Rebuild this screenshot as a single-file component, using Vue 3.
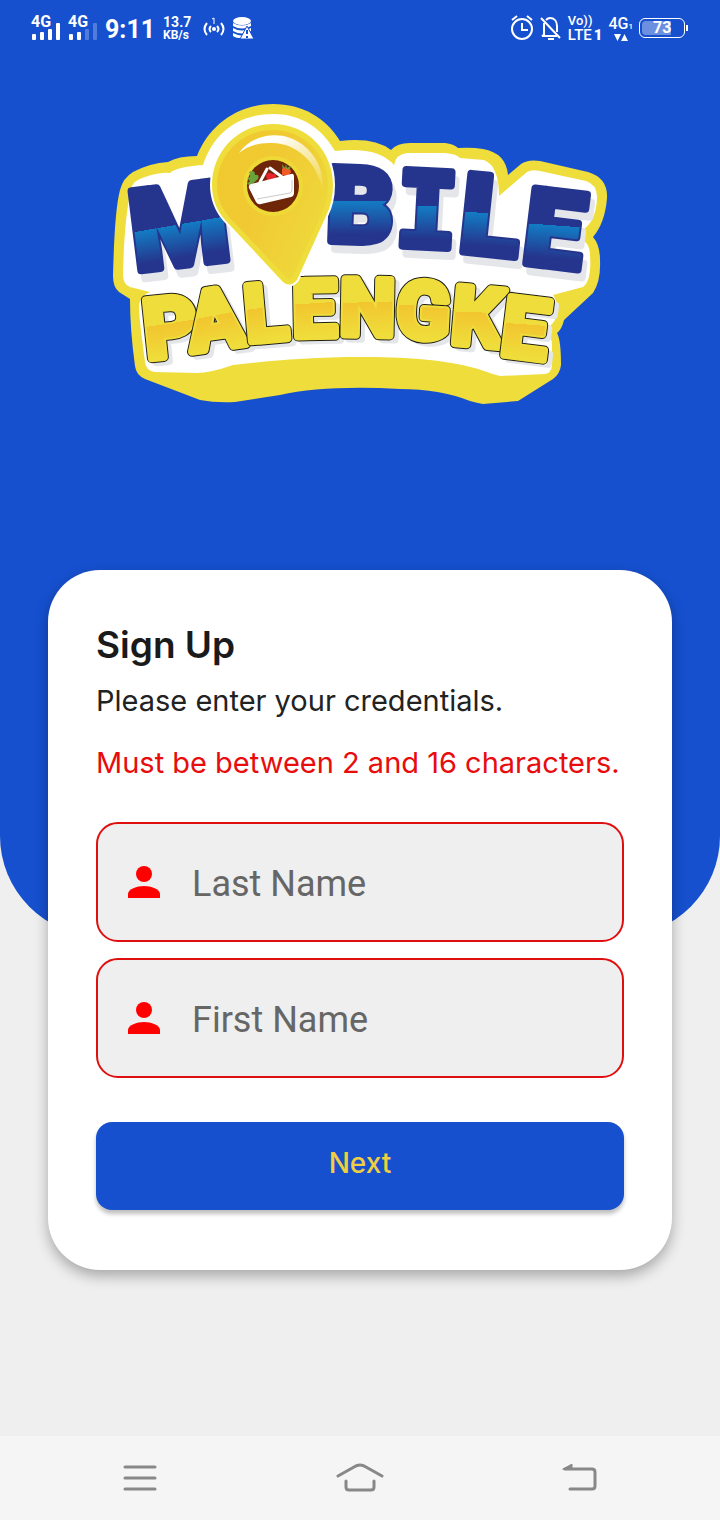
<script setup>
import { ref } from 'vue'

const lastName = ref('')
const firstName = ref('')

const blueLetters = [
  { ch: 'M', x: 184, y: 265, r: -7, size: 112, face: 'round' },
  { ch: 'B', x: 359, y: 242, r: 2, size: 104, face: 'round' },
  { ch: 'I', x: 425, y: 247, r: 3, size: 104, face: 'slab' },
  { ch: 'L', x: 487, y: 254, r: 6, size: 110, face: 'round' },
  { ch: 'E', x: 550, y: 266, r: 7, size: 106, face: 'round' }
]

const yellowLetters = [
  { ch: 'P', x: 173, y: 356, r: -6, size: 82 },
  { ch: 'A', x: 219, y: 348, r: -8, size: 82 },
  { ch: 'L', x: 268, y: 340, r: -5, size: 78 },
  { ch: 'E', x: 315, y: 336, r: -1, size: 78 },
  { ch: 'N', x: 367, y: 335, r: 1, size: 78 },
  { ch: 'G', x: 422, y: 338, r: 3, size: 78 },
  { ch: 'K', x: 475, y: 345, r: 5, size: 80 },
  { ch: 'E', x: 522, y: 357, r: 7, size: 82 }
]

const place = (l, dx = 0, dy = 0) => `translate(${l.x + dx} ${l.y + dy}) rotate(${l.r})`
</script>

<template>
  <div class="screen">
    <header class="hero">
      <div class="status">
        <div class="group">
          <div class="sim">
            <span>4G</span>
            <svg width="30" height="17" viewBox="0 0 30 17" fill="#fff">
              <rect x="1" y="11" width="4" height="6" rx="1" /><rect x="9" y="9" width="4" height="8" rx="1" />
              <rect x="17" y="6" width="4" height="11" rx="1" /><rect x="25" y="0" width="4" height="17" rx="1" />
            </svg>
          </div>
          <div class="sim">
            <span>4G</span>
            <svg width="30" height="17" viewBox="0 0 30 17" fill="#fff">
              <rect x="1" y="11" width="4" height="6" rx="1" /><rect x="9" y="9" width="4" height="8" rx="1" />
              <rect x="17" y="6" width="4" height="11" rx="1" opacity=".25" /><rect x="25" y="0" width="4" height="17" rx="1" opacity=".25" />
            </svg>
          </div>
          <span class="time">9:11</span>
          <div class="speed"><span>13.7</span><span class="unit">KB/s</span></div>
          <svg class="hotspot" width="22" height="22" viewBox="0 0 22 22" fill="none" stroke="#fff" stroke-width="2">
            <path d="M4 6Q-1 12 4 18M8 9Q5 12 8 15M18 6Q23 12 18 18M14 9Q17 12 14 15" />
            <circle cx="11" cy="12" r="2" fill="#fff" stroke="none" />
            <path d="M9 2l2-1v6" stroke-width="1" />
          </svg>
          <svg width="22" height="22" viewBox="0 0 22 22">
            <g fill="#fff"><ellipse cx="10" cy="4" rx="9" ry="4" />
              <path d="M1 6q9 5 18 0v3q-9 5-18 0zM1 11q9 5 18 0v3q-9 5-18 0zM1 16q8 4 13 2v3q-9 1-13-2z" />
              <path d="M15 9l7 13H8z" stroke="#1650ce" /></g>
            <path d="M15 13v4m0 2v2" stroke="#1650ce" stroke-width="2" />
          </svg>
        </div>
        <div class="group right">
          <svg width="24" height="26" viewBox="0 0 24 26" fill="none" stroke="#fff" stroke-width="2">
            <circle cx="12" cy="14" r="10" /><path d="M12 8v7h6M2 5l5-4M22 5l-5-4" />
          </svg>
          <svg width="22" height="26" viewBox="0 0 22 26" fill="none" stroke="#fff" stroke-width="2">
            <path d="M1 3l19 20M6 5q2-2 4-2c4 0 7 3 7 8v6M4 8v12l-2 1h15" /><path d="M8 24h6" stroke-width="2" />
          </svg>
          <div class="volte"><span>Vo))</span><span class="lte">LTE<b>1</b></span></div>
          <div class="data">
            <span>4G<small>1</small></span>
            <svg width="14" height="7" viewBox="0 0 14 7" fill="#fff"><path d="M0 0h7L3.500 7zM7 7h7L10.500 0z" /></svg>
          </div>
          <div class="battery"><span>73</span></div>
        </div>
      </div>

      <svg class="logo" viewBox="110 100 500 308" role="img" aria-label="Mobile Palengke">
        <defs>
          <linearGradient id="blue" gradientUnits="userSpaceOnUse" x1="0" y1="-82" x2="4" y2="0">
            <stop offset=".5" stop-color="#25358d" /><stop offset=".5" stop-color="#137cc4" />
            <stop offset=".9" stop-color="#25358d" />
          </linearGradient>
          <linearGradient id="gold" gradientUnits="userSpaceOnUse" x1="0" y1="-62" x2="3" y2="0">
            <stop offset=".47" stop-color="#efdd3b" /><stop offset=".47" stop-color="#f2c52f" />
            <stop offset="1" stop-color="#efdd3b" />
          </linearGradient>
          <linearGradient id="pin" x1="0" y1="0" x2="1" y2=".6">
            <stop offset="0" stop-color="#f0c92e" /><stop offset=".5" stop-color="#f1ca33" /><stop offset="1" stop-color="#eed83a" />
          </linearGradient>
          <linearGradient id="shine" x1="0" y1="0" x2="1" y2="1">
            <stop offset=".25" stop-color="#fff" /><stop offset="1" stop-color="#fff" stop-opacity=".1" />
          </linearGradient>
          <linearGradient id="basket" x1="0" y1="0" x2="1" y2="1">
            <stop offset="0" stop-color="#e3e4e6" /><stop offset=".3" stop-color="#fff" /><stop offset="1" stop-color="#fff" />
          </linearGradient>
        </defs>

        <path fill="#efdd3b" d="M197 156C209 125 238 104 273 104C303 104 326 118 340 141Q374 137 391 150Q397 143 410 143L445 143Q454 144 458 148Q472 147 483 149Q506 153 508 175L521 164Q528 159 540 161L588 172Q608 178 607 198Q605 223 593 237Q600 245 600 260Q601 281 593 293L564 320Q562 329 557 333Q561 340 561 365Q560 374 553 379L518 401L483 404Q477 403 470 401Q440 389 400 389Q325 385 280 395L235 402Q216 403 200 400L145 379Q136 375 135 366Q130 330 130 299L119 292Q113 287 113 276C114 236 116 205 120 190Q123 178 133 172Q150 163 168 162Q178 156 197 156Z" />
        <path fill="#fff" d="M203 165C213 134 237 114 273 114C300 114 321 127 335 151Q378 146 394 165Q396 154 407 153L445 153Q457 154 460 158L484 160Q499 166 499 196L527 172Q532 169 540 171L586 181Q598 185 597 199Q596 220 584 229Q581 235 575 238Q590 239 590 256Q592 280 583 287L553 295Q560 305 555 320Q550 328 540 333Q552 333 552 345V366Q551 373 545 374L500 376Q492 374 484 371C450 359 400 357 360 357C310 357 266 361 233 365Q210 373 197 373L155 372Q146 371 145 362C142 337 139 319 139 305Q140 296 150 292L130 287Q123 284 123 275Q124 220 131 189Q133 180 145 177Q161 172 170 173Q176 167 203 165Z" />

        <g class="letters" text-anchor="middle">
          <g class="shade">
            <text v-for="(l, i) in blueLetters" :key="i" :class="l.face" :font-size="l.size" :transform="place(l, 4, 8)">{{ l.ch }}</text>
          </g>
          <g class="navy">
            <text v-for="(l, i) in blueLetters" :key="i" :class="l.face" :font-size="l.size" :transform="place(l)">{{ l.ch }}</text>
          </g>
          <g class="swoosh">
            <text v-for="(l, i) in blueLetters" :key="i" :class="l.face" :font-size="l.size" :transform="place(l)">{{ l.ch }}</text>
          </g>
          <g class="slim">
            <g class="shade">
              <text v-for="(l, i) in yellowLetters" :key="i" :font-size="l.size" :transform="place(l, 5, 4)">{{ l.ch }}</text>
            </g>
            <g v-for="(l, i) in yellowLetters" :key="i" :transform="place(l)" :font-size="l.size">
              <text class="ink">{{ l.ch }}</text>
              <text class="lemon">{{ l.ch }}</text>
              <text class="honey">{{ l.ch }}</text>
            </g>
          </g>
        </g>

        <path fill="#efdd3b" stroke="#fff" stroke-width="4" paint-order="stroke" d="M273 124C239 124 212 151 212 185C212 200 217 211 226 221L283 282Q290 288 297 280L326 216Q333 202 333 185C333 151 307 124 273 124Z" />
        <path fill="url(#pin)" d="M273 130C242 130 217 155 217 185C217 199 222 209 230 218L286 277Q290 281 293 276L322 213Q328 200 328 185C328 155 304 130 273 130Z" />
        <path fill="url(#shine)" d="M239 153C253 133 283 129 303 145C319 158 324 174 322 188C317 163 297 143 272 143Q252 142 239 153Z" />
        <circle cx="273" cy="186" r="30" fill="#eed936" /><circle cx="273" cy="186" r="26" fill="#6e2508" />
        <path fill="#69a33c" d="M249 172q6-3 6 3q5-1 3 4l-8 7l-3-3q4-1 2-3l-2-2q5 0 2-6zM282 164l3 4l1-4l1 4l4-2l-2 5h-6z" />
        <path fill="#e5242b" d="M266 175q3-4 6-1q5-1 4 4l-9 3z" />
        <path fill="#f15a24" d="M282 169q4-3 5 1q4-2 4 2l-3 4l-6-1z" />
        <path d="M260 182l7-13M270 168l16 12" stroke="#fff" stroke-width="3" stroke-linecap="round" />
        <path fill="url(#basket)" d="M251 184L291 174Q294 173 294 177V193Q294 196 291 197L261 204Q258 205 256 202L249 188Q248 185 251 184Z" />
        <path d="M257 199l33-6q2-1 2-3v-10" fill="none" stroke="#c9cacc" />
      </svg>
    </header>

    <main class="card">
      <h1>Sign Up</h1>
      <p class="lead">Please enter your credentials.</p>
      <p class="error" role="alert">Must be between 2 and 16 characters.</p>
      <form @submit.prevent>
        <label class="field">
          <svg width="32" height="32" viewBox="0 0 32 32" fill="#f00"><circle cx="16" cy="8" r="8" /><path d="M0 32v-4c0-5 9-8 16-8s16 3 16 8v4z" /></svg>
          <input v-model="lastName" type="text" placeholder="Last Name" aria-label="Last Name" />
        </label>
        <label class="field">
          <svg width="32" height="32" viewBox="0 0 32 32" fill="#f00"><circle cx="16" cy="8" r="8" /><path d="M0 32v-4c0-5 9-8 16-8s16 3 16 8v4z" /></svg>
          <input v-model="firstName" type="text" placeholder="First Name" aria-label="First Name" />
        </label>
        <button class="next" type="submit">Next</button>
      </form>
    </main>

    <nav class="navbar">
      <button type="button" aria-label="Menu">
        <svg width="34" height="28" viewBox="0 0 34 28"><path d="M2 3h30M2 14h30M2 25h30" /></svg>
      </button>
      <button type="button" aria-label="Home">
        <svg width="48" height="30" viewBox="0 0 48 30"><path d="M2 13L18 4q6-4 12 0l16 9M10 18v6q0 3 3 3h22q3 0 3-3v-6" /></svg>
      </button>
      <button type="button" aria-label="Back">
        <svg width="36" height="28" viewBox="0 0 36 28"><path d="M3 5h27q3 0 3 3v14q0 3-3 3H8" /><path class="tip" d="M1 5L10 0v5z" /></svg>
      </button>
    </nav>
  </div>
</template>

<style>
body { background: #efefef; }
</style>

<style scoped>
* { box-sizing: border-box; }
.screen {
  min-height: 100vh;
  display: flex;
  flex-direction: column;
  background: #efefef;
  font-family: Inter, "Liberation Sans", sans-serif;
}
.hero {
  background: #1650ce;
  border-radius: 0 0 100px 100px;
  padding-bottom: 528px;
}
.status {
  height: 56px;
  padding: 0 32px 0 31px;
  display: flex;
  justify-content: space-between;
  align-items: center;
  color: #fff;
  font-family: Roboto, sans-serif;
}
.group { display: flex; align-items: center; gap: 7px; }
.right { gap: 6px; }
.sim { width: 30px; height: 24px; display: grid; }
.sim > * { grid-area: 1 / 1; }
.sim span { font-size: 16px; line-height: 12px; font-weight: 700; }
.sim svg { align-self: end; }
.time { font-size: 25px; font-weight: 700; padding-top: 2px; }
.speed, .volte, .data { display: flex; flex-direction: column; }
.speed { font-size: 14px; line-height: 13px; font-weight: 700; padding: 2px 0 0 1px; }
.unit { font-size: 12px; }
.hotspot { margin-left: 5px; }
.volte { font-size: 13px; line-height: 14px; font-weight: 500; }
.lte { font-size: 15px; }
.lte b { font-weight: 900; margin-left: 2px; }
.data { align-items: center; font-size: 16px; line-height: 15px; font-weight: 500; }
.data small { font-size: 8px; }
.battery {
  position: relative;
  width: 46px;
  height: 20px;
  border: 1px solid #fff;
  border-radius: 6px;
  padding: 2px;
  margin-right: 3px;
}
.battery::after {
  content: "";
  position: absolute;
  right: -4px;
  top: 6px;
  width: 2px;
  height: 6px;
  background: #fff;
}
.battery span {
  display: block;
  width: 72%;
  padding-left: 11px;
  border-radius: 4px 0 0 4px;
  background: #6c8fdf;
  font-size: 16px;
  line-height: 14px;
  font-weight: 700;
}
.logo {
  display: block;
  width: 70%;
  max-width: 500px;
  margin: 44px auto 0;
}
.letters {
  font-family: Roboto, sans-serif;
  font-weight: 900;
  stroke-linejoin: round;
}
.slab { font-family: "DejaVu Sans Mono", monospace; }
.slim { font-family: "Liberation Sans Narrow", Roboto, sans-serif; font-weight: 700; }
.shade { fill: #e4e6e9; stroke: #e4e6e9; stroke-width: 8px; }
.navy { fill: #25358d; stroke: #25358d; stroke-width: 8px; }
.swoosh { fill: url(#blue); stroke: url(#blue); stroke-width: 4px; }
.ink { fill: #1c1c14; stroke: #1c1c14; stroke-width: 10px; }
.lemon { fill: #efdd3b; stroke: #efdd3b; stroke-width: 8px; }
.honey { fill: url(#gold); stroke: url(#gold); stroke-width: 4px; }
.card {
  margin: -366px 48px 48px;
  padding: 48px 48px 60px;
  background: #fff;
  border-radius: 52px;
  box-shadow: 0 6px 14px rgba(0, 0, 0, .3);
}
h1, p { margin: 0; }
h1 { font-size: 37px; line-height: 54px; font-weight: 600; color: #1a1a1a; }
.lead { margin-top: 8px; font-size: 29px; line-height: 42px; color: #222; }
.error { margin-top: 20px; font-size: 29px; line-height: 42px; color: #e80c0c; }
form { margin-top: 38px; display: flex; flex-direction: column; gap: 16px; }
.field {
  height: 120px;
  padding: 0 30px;
  display: flex;
  align-items: center;
  gap: 32px;
  border: 2px solid #e00f0f;
  border-radius: 22px;
  background: #efefef;
}
.field svg { flex: none; }
.field input {
  flex: 1;
  min-width: 0;
  height: 100%;
  padding: 4px 0 0;
  border: 0;
  outline: 0;
  background: transparent;
  color: #222;
  font: 36px Roboto, sans-serif;
}
.field input::placeholder { color: #666; opacity: 1; }
.next {
  height: 88px;
  margin-top: 28px;
  padding: 0 0 6px;
  border: 0;
  border-radius: 16px;
  background: #1650ce;
  color: #efce40;
  font: 500 28px Inter, sans-serif;
  box-shadow: 0 4px 4px rgba(0, 0, 0, .25);
}
.navbar {
  height: 84px;
  margin-top: auto;
  padding: 0 30px;
  display: grid;
  grid-template-columns: repeat(3, 1fr);
  background: #f5f5f5;
}
.navbar button {
  display: flex;
  align-items: center;
  justify-content: center;
  padding: 0;
  border: 0;
  background: none;
}
.navbar svg { fill: none; stroke: #888; stroke-width: 3px; stroke-linecap: round; }
.navbar .tip { fill: #888; stroke-width: 1px; }
</style>
